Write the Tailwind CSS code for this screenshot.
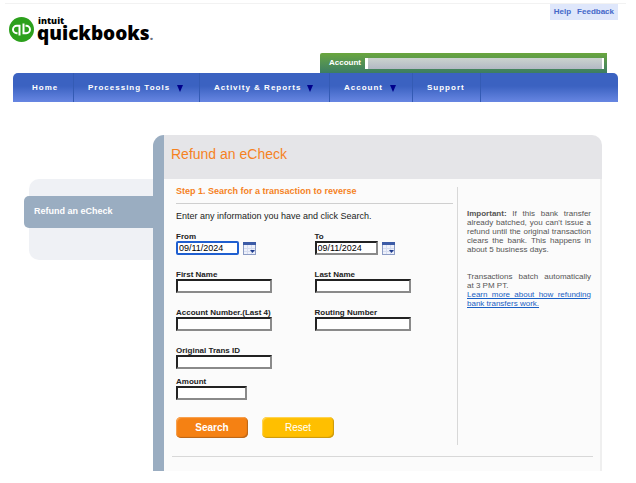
<!DOCTYPE html>
<html lang="en">
<head>
    <meta charset="UTF-8" />
    <meta name="viewport" content="width=device-width, initial-scale=1" />
    <title>Refund an eCheck</title>
    <script src="https://cdn.jsdelivr.net/npm/@tailwindcss/browser@4"></script>
</head>
<body class="bg-white font-['Liberation_Sans',Arial,sans-serif] text-[#222]">

<!-- Header -->
<header class="pl-[13px] pr-[18px]">
    <div class="-ml-2 -mr-2 mt-[3px] h-px bg-[#f2f2f2]"></div>
    <div class="flex justify-between items-start h-[49px]">
        <a href="#" class="flex items-start -ml-1 pt-[13px]" aria-label="Intuit QuickBooks">
            <svg class="w-[25px] h-[25px]" viewBox="0 0 50 50" fill="none">
                <circle cx="25" cy="25" r="25" fill="#2ca01c" />
                <path d="M21 37V17.500H15.500a7.500 7.500 0 0 0 0 15H17" stroke="#fff" stroke-width="4" />
                <path d="M29 13v19.500H34.500a7.500 7.500 0 0 0 0-15H33" stroke="#fff" stroke-width="4" />
            </svg>
            <span class="flex flex-col ml-[3px] text-black font-['Open_Sans',sans-serif] font-extrabold">
                <span class="text-[9px] leading-[8px] pl-px">intuit</span>
                <span class="text-[19px] leading-[16px]">quickbooks<span class="text-[12px] text-gray-500">.</span></span>
            </span>
        </a>
        <div class="flex gap-[6px] bg-[#dfe7fb] px-1 h-4 items-center text-[8px] font-bold text-[#4468c8]">
            <a href="#">Help</a>
            <a href="#">Feedback</a>
        </div>
    </div>
    <div class="flex justify-end pr-[11px]">
        <div class="flex items-center gap-1 w-[287px] h-5 pl-[9px] pr-[3px] rounded-tl-xs bg-linear-to-b from-[#6aa63c] to-[#3c7d62]">
            <label for="account" class="text-[8px] leading-none font-bold text-white">Account</label>
            <input id="account" type="text" class="flex-1 min-w-0 h-[11px] border-l-3 border-r-2 border-white bg-linear-to-b from-[#cbd3cf] to-[#b2b9c4]" />
        </div>
    </div>
    <nav class="flex h-[29px] rounded-t-[5px] bg-linear-to-b from-[#3b62c1] from-45% to-[#6786e2] text-white text-[8px] font-bold tracking-[1px] whitespace-nowrap">
        <a href="#" class="flex items-center w-[61px] pl-[19px] border-r border-[#345bb4]">Home</a>
        <a href="#" class="flex items-center justify-between w-[126px] pl-[14px] pr-4 border-r border-[#345bb4]">Processing Tools
            <svg class="w-[6px] h-[7px] mt-[2px]" viewBox="0 0 6 7"><path d="M0 0h6L3 7z" fill="#00008b" /></svg>
        </a>
        <a href="#" class="flex items-center justify-between w-[130px] pl-[14px] pr-4 border-r border-[#345bb4]">Activity &amp; Reports
            <svg class="w-[6px] h-[7px] mt-[2px]" viewBox="0 0 6 7"><path d="M0 0h6L3 7z" fill="#00008b" /></svg>
        </a>
        <a href="#" class="flex items-center justify-between w-[83px] pl-[14px] pr-4 border-r border-[#345bb4]">Account
            <svg class="w-[6px] h-[7px] mt-[2px]" viewBox="0 0 6 7"><path d="M0 0h6L3 7z" fill="#00008b" /></svg>
        </a>
        <a href="#" class="flex items-center w-[68px] pl-[14px] border-r border-[#345bb4]">Support</a>
    </nav>
</header>

<div class="flex mt-[33px] pl-6 pr-[34px]">

    <!-- Side menu -->
    <aside class="w-[129px] shrink-0 pt-11">
        <div class="ml-[5px] h-[17px] rounded-tl-[10px] bg-[#eff1f5]"></div>
        <a href="#" class="flex items-center h-8 pl-[10px] rounded-l-[5px] bg-[#9aadc1] text-white text-[9px] font-bold">Refund an eCheck</a>
        <div class="ml-[5px] h-8 rounded-bl-[10px] bg-[#eff1f5]"></div>
    </aside>

    <main class="flex-1 min-w-0 border-l-[11px] border-[#9aadc1] rounded-tl-[11px] rounded-tr-[10px] overflow-hidden">
        <h1 class="h-11 pl-[7px] flex items-center pb-[5px] bg-[#e5e5e8] text-[#f5821f] text-[14px]">Refund an eCheck</h1>

        <div class="bg-[#fbfbfb] border-r-2 border-[#efefef] pt-2 pl-2 pr-[7px] pb-[14px]">
            <div class="flex">
                <form class="flex-1 pl-1 pb-[7px]">
                    <h2 class="h-4 mr-1 leading-[9px] text-[9px] font-bold text-[#f5821f]">Step 1. Search for a transaction to reverse</h2>
                    <div class="mr-1 h-px bg-[#cfcfcf]"></div>
                    <p class="mt-[7px] text-[9px] leading-[11px]">Enter any information you have and click Search.</p>

                    <div class="grid grid-cols-2 mt-[10px] mr-1 text-[8px] leading-[9px]">
                        <div class="h-[38px]">
                            <label for="from" class="block font-bold">From</label>
                            <div class="flex gap-1">
                                <input id="from" type="text" value="09/11/2024" class="w-[63px] h-[14px] pl-px border-2 border-[#1f5fd0] rounded-xs bg-white text-[9px] text-black outline-none" />
                                <button type="button" aria-label="Pick from date">
                                    <svg class="w-[13px] h-[13px]" viewBox="0 0 13 13">
                                        <rect x="0.5" y="0.5" width="12" height="12" fill="#eef1fa" stroke="#8c9cc4" />
                                        <path d="M0 0h13v3H0z" fill="#3c5ba6" />
                                        <path d="M4.500 3v9M8.500 3v9M1 6.500h11M1 9.500h11" stroke="#d5dcf0" />
                                        <path d="M7 8h5l-2.500 3z" fill="#1d3b8e" />
                                    </svg>
                                </button>
                            </div>
                        </div>
                        <div class="h-[38px]">
                            <label for="to" class="block font-bold">To</label>
                            <div class="flex gap-1">
                                <input id="to" type="text" value="09/11/2024" class="w-[63px] h-[14px] pl-px border-2 border-t-[#222] border-l-[#222] border-b-[#8a8a8a] border-r-[#8a8a8a] bg-white text-[9px] text-black" />
                                <button type="button" aria-label="Pick to date">
                                    <svg class="w-[13px] h-[13px]" viewBox="0 0 13 13">
                                        <rect x="0.5" y="0.5" width="12" height="12" fill="#eef1fa" stroke="#8c9cc4" />
                                        <path d="M0 0h13v3H0z" fill="#3c5ba6" />
                                        <path d="M4.500 3v9M8.500 3v9M1 6.500h11M1 9.500h11" stroke="#d5dcf0" />
                                        <path d="M7 8h5l-2.500 3z" fill="#1d3b8e" />
                                    </svg>
                                </button>
                            </div>
                        </div>
                        <div class="h-[38px]">
                            <label for="first" class="block font-bold">First Name</label>
                            <input id="first" type="text" class="block w-24 h-[14px] border-2 border-t-[#222] border-l-[#222] border-b-[#8a8a8a] border-r-[#8a8a8a] bg-white" />
                        </div>
                        <div class="h-[38px]">
                            <label for="last" class="block font-bold">Last Name</label>
                            <input id="last" type="text" class="block w-24 h-[14px] border-2 border-t-[#222] border-l-[#222] border-b-[#8a8a8a] border-r-[#8a8a8a] bg-white" />
                        </div>
                        <div class="h-[38px]">
                            <label for="acct" class="block font-bold">Account Number.(Last 4)</label>
                            <input id="acct" type="text" class="block w-24 h-[14px] border-2 border-t-[#222] border-l-[#222] border-b-[#8a8a8a] border-r-[#8a8a8a] bg-white" />
                        </div>
                        <div class="h-[38px]">
                            <label for="routing" class="block font-bold">Routing Number</label>
                            <input id="routing" type="text" class="block w-24 h-[14px] border-2 border-t-[#222] border-l-[#222] border-b-[#8a8a8a] border-r-[#8a8a8a] bg-white" />
                        </div>
                        <div class="h-[31px] col-span-2">
                            <label for="trans" class="block font-bold">Original Trans ID</label>
                            <input id="trans" type="text" class="block w-24 h-[14px] border-2 border-t-[#222] border-l-[#222] border-b-[#8a8a8a] border-r-[#8a8a8a] bg-white" />
                        </div>
                        <div class="col-span-2">
                            <label for="amount" class="block font-bold">Amount</label>
                            <input id="amount" type="text" class="block w-[71px] h-[14px] border-2 border-t-[#222] border-l-[#222] border-b-[#8a8a8a] border-r-[#8a8a8a] bg-white" />
                        </div>
                    </div>

                    <div class="flex gap-[14px] mt-[17px] text-[10px] text-white">
                        <button type="submit" class="w-[72px] h-[21px] pb-px rounded-[5px] bg-[#f58113] font-bold shadow-[inset_-1px_-1px_1px_#b8651a,inset_1px_1px_1px_#f9a556]">Search</button>
                        <button type="reset" class="w-[72px] h-[21px] pb-px rounded-[5px] bg-[#ffbf00] shadow-[inset_-1px_-1px_1px_#c9980f,inset_1px_1px_1px_#ffd659]">Reset</button>
                    </div>
                </form>

                <!-- Notes -->
                <div class="w-[136px] shrink-0 border-l border-[#d8d8d8] pl-[9px] pr-[2px] pt-[22px] text-[8px] leading-[9px] text-justify text-[#555]">
                    <p><strong>Important:</strong> If this bank transfer already batched, you can't issue a refund until the original transaction clears the bank. This happens in about 5 business days.</p>
                    <p class="mt-[18px]">Transactions batch automatically at 3 PM PT.</p>
                    <p><a href="#" class="underline text-[#1a5fc4]">Learn more about how refunding bank transfers work.</a></p>
                </div>
            </div>
            <div class="mt-[11px] h-px bg-[#d8d8d8]"></div>
        </div>
    </main>
</div>

</body>
</html>
